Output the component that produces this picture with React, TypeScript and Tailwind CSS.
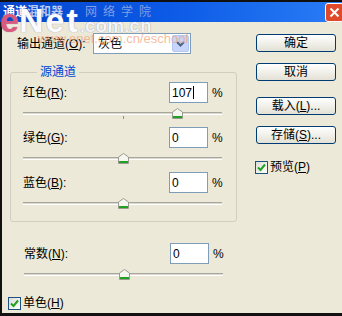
import React from "react";

const Thumb = ({ left }: { left: number }) => (
  <svg
    className="absolute top-[5px]"
    style={{ left }}
    width="11"
    height="11"
    viewBox="0 0 11 11"
  >
    <path
      d="M0.5 4 L5.5 0.5 L10.5 4 V10.5 H0.5 Z"
      fill="#f6f6f1"
      stroke="#9a9a92"
    />
    <rect x="1" y="8" width="9" height="2" fill="#21a121" />
  </svg>
);

const Slider = ({ thumb, tick }: { thumb: number; tick?: boolean }) => (
  <div className="relative h-[24px]">
    <div className="absolute left-0 top-[9px] w-[199px] h-[3px] border-t border-[#a7a69c] border-b border-b-white bg-[#dcdad0]" />
    {tick && <div className="absolute left-[100px] top-[13px] w-px h-[3px] bg-[#8f8e86]" />}
    <Thumb left={thumb} />
  </div>
);

const ValueRow = ({
  label,
  k,
  value,
  caret,
}: {
  label: string;
  k: string;
  value: string;
  caret?: boolean;
}) => (
  <div className="flex items-center h-[21px]">
    <div className="w-[146px]">
      {label}(<u>{k}</u>):
    </div>
    <div className="w-[39px] h-[21px] border border-[#7f9db9] bg-white flex items-center pl-[2px]">
      {value}
      {caret && <span className="w-px h-[13px] bg-black ml-[1px]" />}
    </div>
    <div className="ml-[4px]">%</div>
  </div>
);

const Button = ({ children }: { children: React.ReactNode }) => (
  <div className="w-[80px] h-[18px] rounded-[3px] border border-[#003c74] bg-linear-to-b from-white to-[#e3e1d5] flex items-center justify-center text-black">
    {children}
  </div>
);

const Check = () => (
  <div className="w-[13px] h-[13px] border border-[#1c5180] bg-linear-to-br from-[#dcdcd6] to-white flex items-center justify-center">
    <svg width="9" height="9" viewBox="0 0 9 9">
      <path d="M1 4.5 L3.5 7 L8 1.5" fill="none" stroke="#21a121" strokeWidth="2" />
    </svg>
  </div>
);

export default function App() {
  return (
    <div className="w-[342px] h-[316px] overflow-hidden relative flex flex-col text-[12px] leading-[14px] text-black font-['Liberation_Sans','Noto_Sans_CJK_SC',sans-serif]">
      {/* title bar */}
      <div className="h-[22px] border-t-2 border-[#101010] bg-linear-to-r from-[#0645cc] via-[#0c5ae6] to-[#2a7cf6] flex items-center justify-between">
        <div className="pl-[3px] font-bold text-white">
          通道<span className="text-[#b8cdf6]">混和器</span>
          <span className="ml-[22px] tracking-[6px] font-normal text-[#7f9fe6]">网络学院</span>
        </div>
        <div className="w-[19px] h-[19px] mr-[-2px] rounded-[3px] border border-white bg-[#e0492a] flex items-center justify-center">
          <svg width="11" height="11" viewBox="0 0 11 11">
            <path d="M1.5 1.5 L9.5 9.5 M9.5 1.5 L1.5 9.5" stroke="white" strokeWidth="2" />
          </svg>
        </div>
      </div>

      {/* body */}
      <div className="flex-1 flex border-l-[2px] border-b-[3px] border-[#111] bg-[#ece9d8]">
        <div className="w-[243px] flex flex-col">
          <div className="mt-[11px] h-[21px] flex items-center">
            <div className="ml-[15px] w-[76px]">
              输出通道(<u>O</u>):
            </div>
            <div className="w-[98px] h-[21px] border border-[#7f9db9] bg-white flex items-center">
              <div className="flex-1 pl-[4px]">灰色</div>
              <div className="w-[17px] h-[17px] mr-[1px] rounded-[2px] border border-[#b3c8f5] bg-[#c6d6fa] flex items-center justify-center">
                <svg width="9" height="6" viewBox="0 0 9 6">
                  <path d="M1 1 L4.5 4.5 L8 1" fill="none" stroke="#4d6185" strokeWidth="2" />
                </svg>
              </div>
            </div>
          </div>

          <fieldset className="mt-[11px] ml-[8px] w-[227px] border border-[#d0d0bf] rounded-[3px] pl-[12px] pb-[4px]">
            <legend className="ml-[14px] px-[3px] text-[#0046d5]">源通道</legend>
            <div className="mt-[3px]">
              <ValueRow label="红色" k="R" value="107" caret />
              <Slider thumb={149} tick />
              <ValueRow label="绿色" k="G" value="0" />
              <Slider thumb={95} />
              <ValueRow label="蓝色" k="B" value="0" />
              <Slider thumb={95} />
            </div>
          </fieldset>

          <div className="mt-[21px] ml-[22px]">
            <ValueRow label="常数" k="N" value="0" />
            <Slider thumb={95} />
          </div>

          <div className="mt-[8px] ml-[6px] flex items-center gap-[2px]">
            <Check />
            <span>
              单色(<u>H</u>)
            </span>
          </div>
        </div>

        <div className="ml-[11px] flex flex-col">
          <div className="mt-[12px]">
            <Button>确定</Button>
          </div>
          <div className="mt-[11px]">
            <Button>取消</Button>
          </div>
          <div className="mt-[16px]">
            <Button>
              载入(<u>L</u>)...
            </Button>
          </div>
          <div className="mt-[11px]">
            <Button>
              存储(<u>S</u>)...
            </Button>
          </div>
          <div className="mt-[16px] -ml-[1px] flex items-center gap-[2px]">
            <Check />
            <span>
              预览(<u>P</u>)
            </span>
          </div>
        </div>
      </div>

      {/* watermark */}
      <div className="absolute left-0 top-[3px] pointer-events-none">
        <div className="flex items-baseline font-['Liberation_Sans',sans-serif] font-bold [text-shadow:0_0_1px_#7c8098]">
          <span className="text-[34px] leading-[34px] text-[#e8557c]/90">e</span>
          <span className="text-[34px] leading-[34px] text-[#fbfbfd] tracking-[2px]">Net</span>
          <span className="text-[19px] leading-[19px] text-[#f4f4f8]">.com.cn</span>
        </div>
        <div className="ml-[38px] -mt-[4px] text-[13px] leading-[12px] text-[#f0a070]/70 font-['Liberation_Sans',sans-serif]">
          www.enet.com.cn/eschool
        </div>
      </div>
    </div>
  );
}
